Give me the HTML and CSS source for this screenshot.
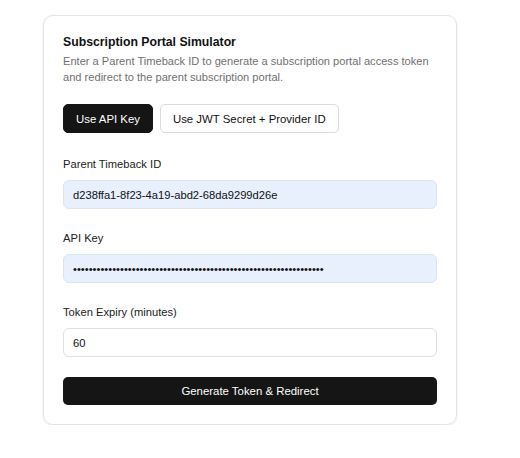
FILE: index.html
```html
<!DOCTYPE html>
<html>
<head>
<meta charset="utf-8">
<link rel="stylesheet" href="styles.css">
</head>
<body>
<div class="card">
  <h1 class="title">Subscription Portal Simulator</h1>
  <p class="desc">Enter a Parent Timeback ID to generate a subscription portal access token and redirect to the parent subscription portal.</p>
  <div class="tabs">
    <button class="tab active">Use API Key</button>
    <button class="tab">Use JWT Secret + Provider ID</button>
  </div>
  <div class="field first">
    <label class="label">Parent Timeback ID</label>
    <div class="input filled">d238ffa1-8f23-4a19-abd2-68da9299d26e</div>
  </div>
  <div class="field">
    <label class="label">API Key</label>
    <div class="input filled">••••••••••••••••••••••••••••••••••••••••••••••••••••••••••••••••</div>
  </div>
  <div class="field">
    <label class="label">Token Expiry (minutes)</label>
    <div class="input">60</div>
  </div>
  <button class="submit">Generate Token &amp; Redirect</button>
</div>
</body>
</html>
```
FILE: styles.css
```css
html, body { margin: 0; padding: 0; background: #fff; }
body {
  font-family: "Liberation Sans", Arial, sans-serif;
  color: #111;
  padding: 15px 0 0 43px;
}
.card {
  box-sizing: border-box;
  width: 414px;
  border: 1px solid #e3e3e3;
  border-radius: 10px;
  box-shadow: 0 1px 3px rgba(0,0,0,0.08);
  padding: 17px 19px 19px;
  display: flex;
  flex-direction: column;
}
.title {
  margin: 0;
  font-size: 12.25px;
  font-weight: bold;
  line-height: 18px;
  color: #111;
}
.desc {
  margin: 2px 0 0;
  font-size: 11.1px;
  line-height: 16px;
  color: #707070;
}
.tabs {
  display: flex;
  gap: 7px;
  margin-top: 19px;
}
.tab {
  font-family: inherit;
  font-size: 11.4px;
  height: 29px;
  padding: 0 12px;
  border: 1px solid #dcdcdc;
  border-radius: 5px;
  background: #fff;
  color: #111;
}
.tab.active { background: #151515; border-color: #151515; color: #fff; }
.field {
  display: flex;
  flex-direction: column;
  gap: 8px;
  margin-top: 21px;
}
.field.first { margin-top: 23px; }
.label { font-size: 11.2px; line-height: 16px; color: #222; }
.input {
  box-sizing: border-box;
  height: 29px;
  border: 1px solid #e0e0e0;
  border-radius: 6px;
  padding: 0 9px;
  font-size: 11.2px;
  display: flex;
  align-items: center;
  color: #111;
  background: #fff;
}
.input.filled { background: #e8f0fe; border-color: #dde4ee; }
.submit {
  margin-top: 20px;
  height: 28px;
  border: none;
  border-radius: 5px;
  background: #151515;
  color: #fff;
  font-family: inherit;
  font-size: 11.4px;
}
```
